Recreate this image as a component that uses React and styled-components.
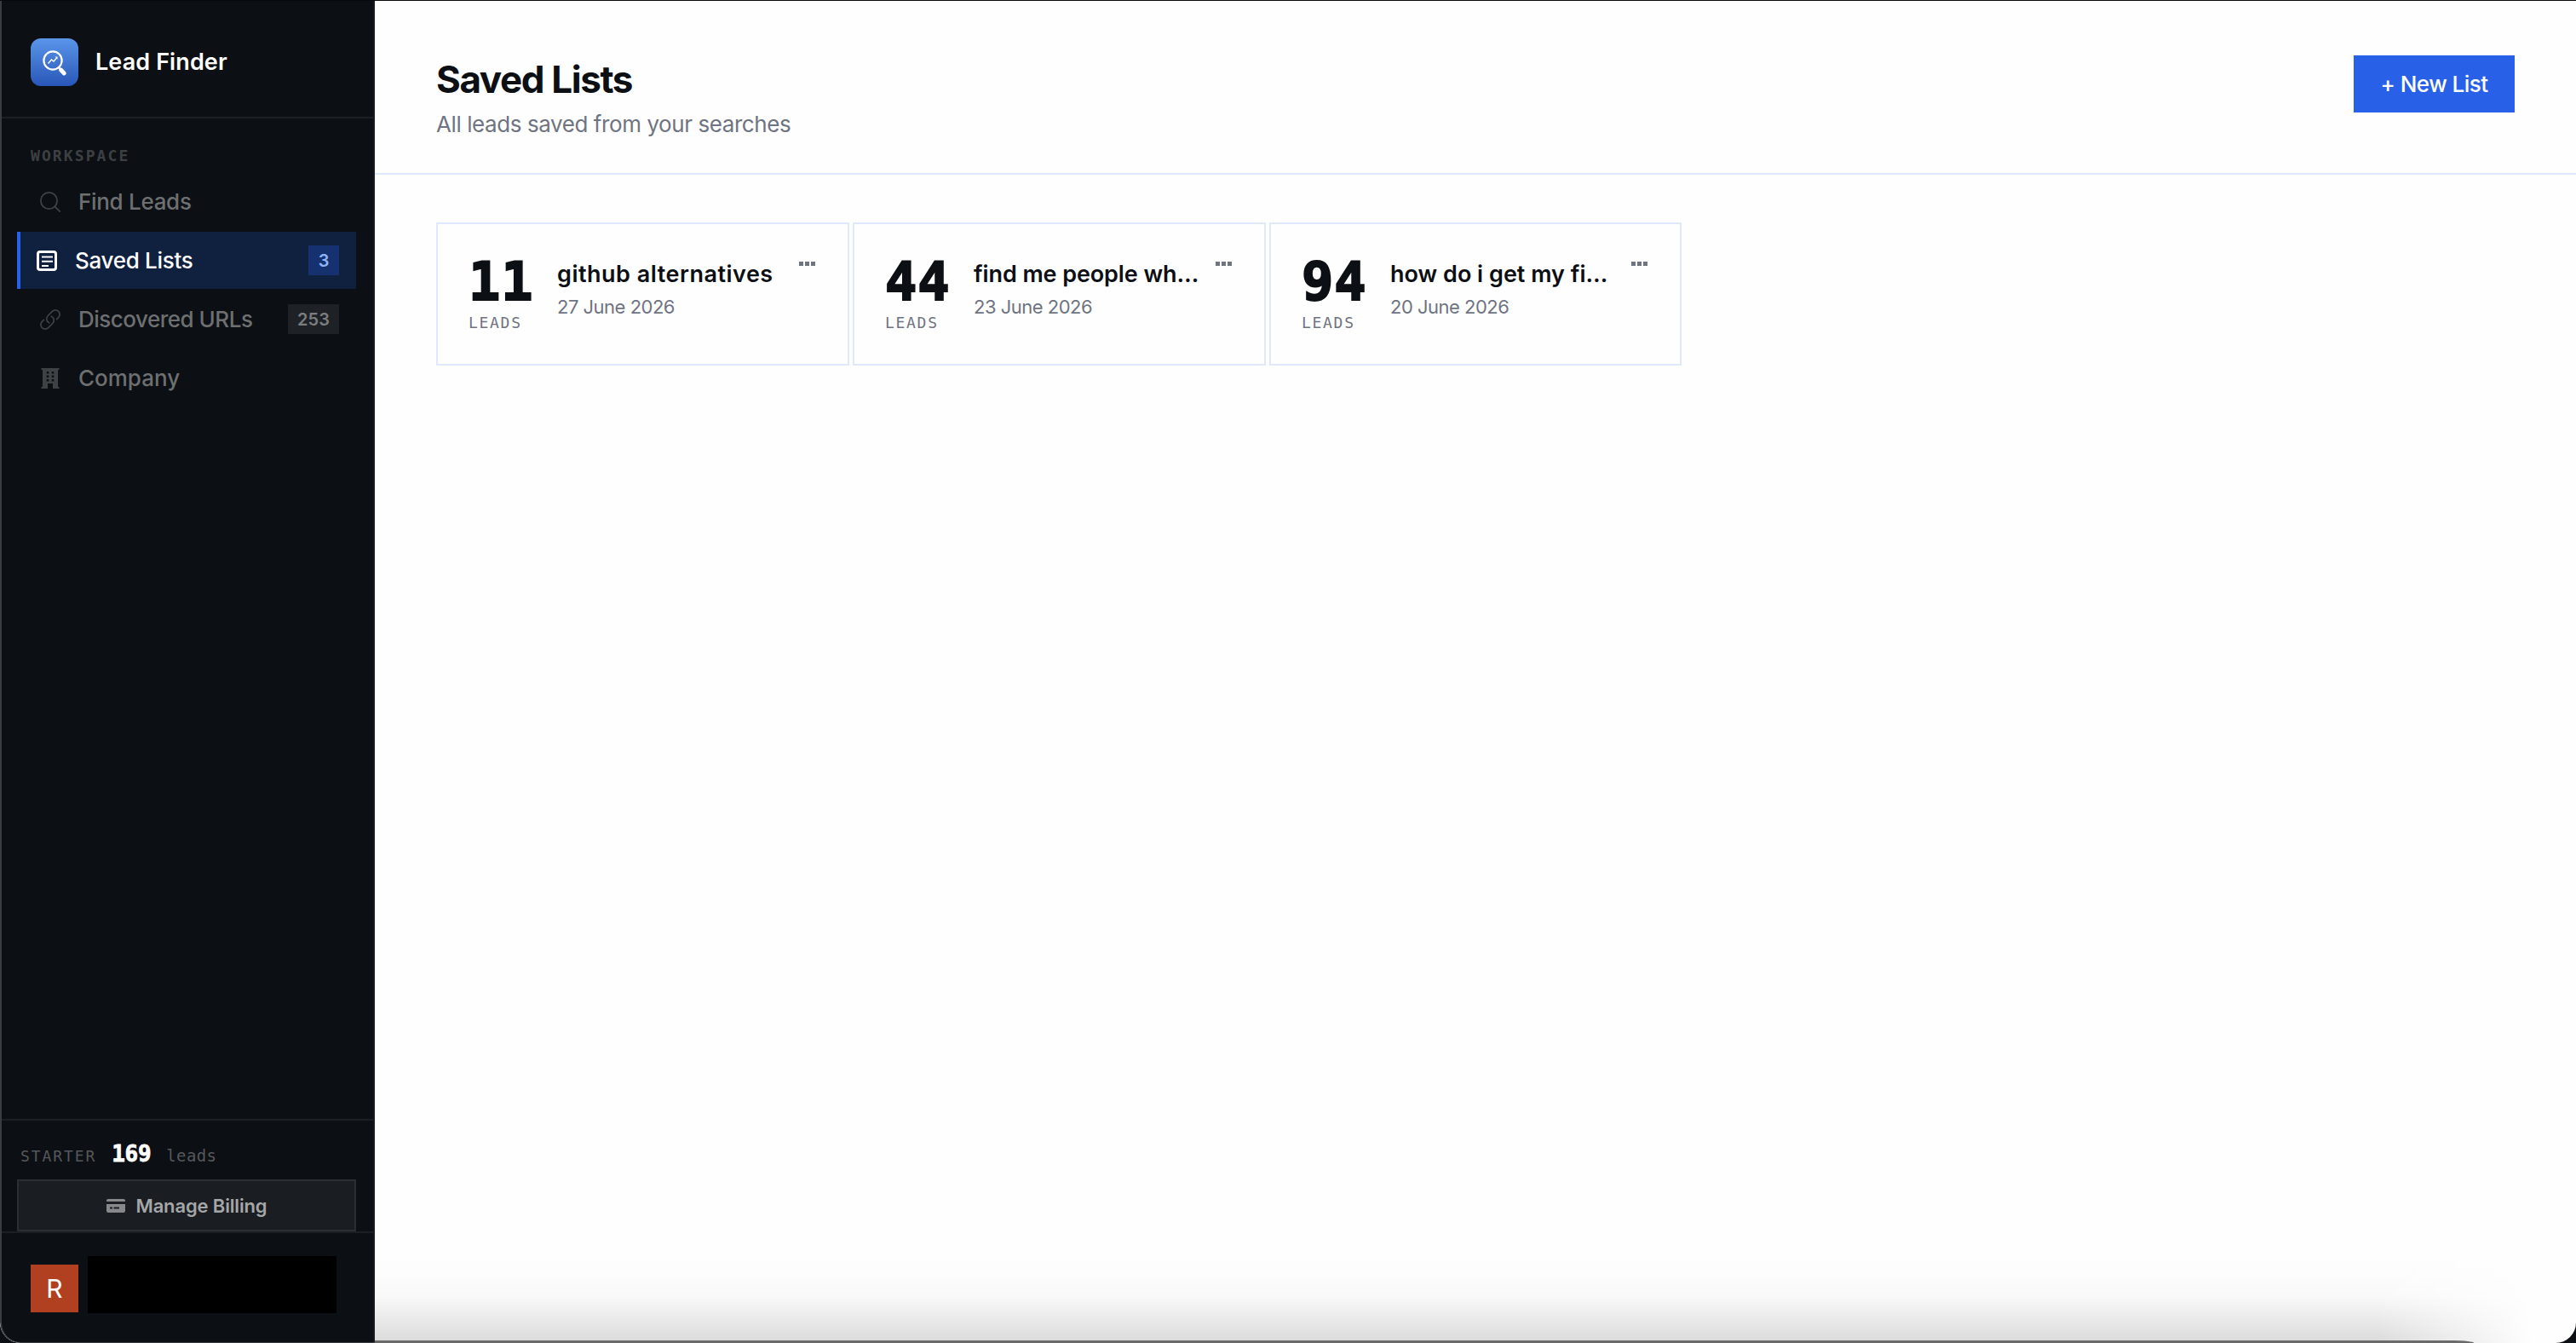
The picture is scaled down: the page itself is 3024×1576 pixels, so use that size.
import styled, { createGlobalStyle } from 'styled-components';

const GlobalStyle = createGlobalStyle`
  * {
    box-sizing: border-box;
  }
  body {
    margin: 0;
    background: #0c0f13;
    font-family: 'Inter', sans-serif;
    overflow: hidden;
  }
  p, h1, h2 {
    margin: 0;
  }
  button {
    border: 0;
    padding: 0;
    font: inherit;
  }
`;

const ui = `'Inter', 'Liberation Sans', sans-serif`;
const mono = `'DejaVu Sans Mono', 'Liberation Mono', monospace`;

const Label = styled.span`
  font-family: ${(p) => (p.$mono ? mono : ui)};
  font-size: ${(p) => p.$size}px;
  font-weight: ${(p) => p.$weight || 400};
  letter-spacing: ${(p) => p.$track || 0}px;
  line-height: ${(p) => p.$line || 32}px;
  color: ${(p) => p.$color || 'inherit'};
  white-space: pre;
`;

const Window = styled.div`
  display: flex;
  position: relative;
  width: 3024px;
  height: 1576px;
  overflow: hidden;
  border-top: 1px solid #08090b;
  border-radius: 0 0 24px 24px;
  background: #fefefe;
`;

const Sidebar = styled.aside`
  display: flex;
  flex-direction: column;
  flex: none;
  width: 440px;
  height: 1575px;
  background: #0c0f13;
  border-left: 2px solid #3a3d40;
  border-right: 2px solid #171b1e;
  border-bottom: 1px solid #3a3d40;
  border-bottom-left-radius: 24px;
`;

const Brand = styled.div`
  display: flex;
  align-items: center;
  gap: 20px;
  height: 138px;
  padding: 8px 0 0 34px;
  border-bottom: 2px solid #1c2024;
`;

const Nav = styled.nav`
  flex: 1;
  display: flex;
  flex-direction: column;
  gap: 2px;
  padding: 28px 20px 0 18px;
`;

const Section = styled.div`
  padding-left: 16px;
  height: 34px;
`;

const NavItem = styled.div`
  display: flex;
  align-items: center;
  height: 67px;
  padding: 0 20px 0 ${(p) => (p.$active ? 19 : 27)}px;
  color: ${(p) => (p.$active ? '#ffffff' : '#6d6f71')};
  background: ${(p) => (p.$active ? '#10203f' : 'transparent')};
  border-left: ${(p) => (p.$active ? '4px solid #2860e8' : '0')};

  svg {
    flex: none;
    width: 24px;
    height: 24px;
    margin-right: 21px;
    color: ${(p) => (p.$active ? '#ffffff' : '#3f4245')};
  }
`;

const Count = styled.span`
  display: flex;
  align-items: center;
  justify-content: center;
  margin-left: auto;
  width: ${(p) => p.$width}px;
  height: 35px;
  color: ${(p) => (p.$active ? '#8db4fb' : '#7b7d7f')};
  background: ${(p) => (p.$active ? '#15316f' : '#1e2226')};
`;

const Plan = styled.div`
  height: 132px;
  padding: 0 20px 0 18px;
  border-top: 2px solid #1c2024;
`;

const Usage = styled.div`
  display: flex;
  align-items: baseline;
  gap: 18px;
  height: 69px;
  padding: 23px 0 0 4px;
`;

const Remaining = styled(Label)`
  -webkit-text-stroke: 0.8px currentColor;
`;

const Billing = styled.button`
  display: flex;
  align-items: center;
  justify-content: center;
  gap: 13px;
  width: 100%;
  height: 61px;
  color: #a4a6a8;
  background: #1a1d21;
  border: 2px solid #2b2e32;
`;

const Account = styled.div`
  display: flex;
  height: 130px;
  gap: 11px;
  padding: 27px 0 0 34px;
  border-top: 2px solid #1c2024;
`;

const Avatar = styled.div`
  display: flex;
  align-items: center;
  justify-content: center;
  width: 56px;
  height: 56px;
  margin-top: 10px;
  background: #b14020;
`;

const Redacted = styled.div`
  width: 292px;
  height: 67px;
  background: #000;
`;

const Main = styled.main`
  flex: 1;
  height: 1575px;
`;

const Header = styled.header`
  display: flex;
  justify-content: space-between;
  height: 204px;
  padding: 64px 72px 0 72px;
  border-bottom: 2px solid #dfe9fb;
`;

const Heading = styled.div`
  display: flex;
  flex-direction: column;
`;

const NewList = styled.button`
  display: flex;
  align-items: center;
  justify-content: center;
  width: 189px;
  height: 67px;
  color: #fff;
  background: #2860e8;
`;

const Grid = styled.section`
  display: grid;
  grid-template-columns: 485px 485px 484px;
  gap: 4px;
  padding: 56px 72px;
`;

const Card = styled.article`
  display: flex;
  height: 168px;
  padding: 36px 36px 0 36px;
  border: 2px solid #dfe9fb;
`;

const Total = styled.div`
  display: flex;
  flex-direction: column;
  width: 104px;
  flex: none;
`;

const Figure = styled(Label)`
  -webkit-text-stroke: 2px currentColor;
`;

const Info = styled.div`
  display: flex;
  flex-direction: column;
  padding-top: 4px;
`;

const Dots = styled.div`
  display: flex;
  gap: 2px;
  margin: 8px 2px 0 auto;

  i {
    width: 5px;
    height: 5px;
    background: #6f7482;
  }
`;

/* shade along the lower edge of the window */
const Shade = styled.div`
  position: absolute;
  left: 440px;
  right: 0;
  bottom: 0;
  height: 100px;
  background: linear-gradient(to bottom, rgba(0, 0, 0, 0), rgba(0, 0, 0, 0.02) 45%, rgba(0, 0, 0, 0.14) 100%);
  mask-image: linear-gradient(to right, #000 91%, transparent 98%);
`;

const Edge = styled.div`
  position: absolute;
  left: 440px;
  width: 2464px;
  bottom: 0;
  height: 3px;
  background: #6a6a6a;
  border-top-right-radius: 24px 3px;
`;

const Logo = () => (
  <svg width='56' height='56' viewBox='0 0 56 56' fill='none'>
    <defs>
      <linearGradient id='logo' x1='0' y1='0' x2='0' y2='1'>
        <stop offset='0' stopColor='#5a96e9' />
        <stop offset='1' stopColor='#2856b8' />
      </linearGradient>
    </defs>
    <rect width='56' height='56' rx='12' fill='url(#logo)' />
    <circle cx='26' cy='26' r='10.6' stroke='#fff' strokeWidth='2.2' />
    <path d='M20.5 29.500l4-4.500 2.500 2 4-4.500' stroke='#fff' strokeWidth='1.4' />
    <path d='M28.500 21.500h3v3z' fill='#fff' />
    <path d='M33 34l2 2' stroke='#fff' strokeWidth='2' />
    <path d='M35.500 37l3.800 4' stroke='#fff' strokeWidth='4.800' strokeLinecap='round' />
  </svg>
);

const SearchIcon = () => (
  <svg viewBox='0 0 24 24' fill='none' stroke='currentColor' strokeWidth='1.8'>
    <circle cx='10.5' cy='10.5' r='9.6' />
    <path d='M17.500 17.500L23.200 23.200' strokeLinecap='round' />
  </svg>
);

const ListIcon = () => (
  <svg viewBox='0 0 24 24' fill='none' stroke='currentColor'>
    <rect x='1.5' y='1.5' width='21' height='21' rx='2.5' strokeWidth='3' />
    <path d='M6 7.500h13M6 12.700h13M6 18h8' strokeWidth='2' />
  </svg>
);

const LinkIcon = () => (
  <svg
    viewBox='1.5 1.5 21 21'
    fill='none'
    stroke='currentColor'
    strokeWidth='1.5'
    strokeLinecap='round'
    strokeLinejoin='round'
  >
    <path d='M13.190 8.688a4.500 4.500 0 0 1 1.242 7.244l-4.500 4.500a4.500 4.500 0 0 1-6.364-6.364l1.757-1.757m13.350-.622l1.757-1.757a4.500 4.500 0 0 0-6.364-6.364l-4.500 4.500a4.500 4.500 0 0 0 1.242 7.244' />
  </svg>
);

const BuildingIcon = () => (
  <svg viewBox='0 0 24 24' fill='currentColor'>
    <path
      fillRule='evenodd'
      d='M1.500 0h21v2H21v20h1.500v2H15v-6H9v6H1.500v-2H3V2H1.500zM7.700 4v2.600h2.600V4zM13.700 4v2.600h2.600V4zM7.700 8.500v2.600h2.600V8.500zM13.700 8.500v2.600h2.600V8.500zM7.700 13v2.600h2.600V13zM13.700 13v2.600h2.600V13z'
    />
  </svg>
);

const CardIcon = () => (
  <svg width='22' height='16' viewBox='0 0 22 16' fill='#86888a'>
    <path d='M0 3V2a2 2 0 0 1 2-2h18a2 2 0 0 1 2 2v1z' />
    <path fillRule='evenodd' d='M0 6h22v8a2 2 0 0 1-2 2H2a2 2 0 0 1-2-2zM4 9.500v2h3v-2zM8.500 9.500v2H15v-2z' />
  </svg>
);

const lists = [
  { total: 11, name: 'github alternatives', date: '27 June 2026', track: 0.5 },
  { total: 44, name: 'find me people wh…', date: '23 June 2026', track: -0.1 },
  { total: 94, name: 'how do i get my fi…', date: '20 June 2026', track: 0 }
];

const navItems = [
  { name: 'Find Leads', icon: SearchIcon, track: -0.3 },
  { name: 'Saved Lists', icon: ListIcon, track: -0.3, count: 3, width: 36, active: true },
  { name: 'Discovered URLs', icon: LinkIcon, track: -0.5, count: 253, width: 60 },
  { name: 'Company', icon: BuildingIcon, track: 0 }
];

function App() {
  return (
    <>
      <GlobalStyle />
      <Window>
        <Sidebar>
          <Brand>
            <Logo />
            <Label $size={27} $weight={600} $track={0.1} $line={34} $color='#fff'>Lead Finder</Label>
          </Brand>
          <Nav>
            <Section>
              <Label $mono $size={18} $weight={700} $track={2.1} $color='#3d4043'>WORKSPACE</Label>
            </Section>
            {navItems.map(({ name, icon: Icon, track, count, width, active }) => (
              <NavItem key={name} $active={active}>
                <Icon />
                <Label $size={26} $weight={500} $track={track}>{name}</Label>
                {count && (
                  <Count $width={width} $active={active}>
                    <Label $size={20} $weight={600}>{count}</Label>
                  </Count>
                )}
              </NavItem>
            ))}
          </Nav>
          <Plan>
            <Usage>
              <Label $mono $size={18} $track={1.9} $color='#55585b'>STARTER</Label>
              <Remaining $mono $size={26} $weight={700} $track={-0.3} $color='#fff'>169</Remaining>
              <Label $mono $size={19} $track={0.4} $color='#55585b'>leads</Label>
            </Usage>
            <Billing>
              <CardIcon />
              <Label $size={22} $weight={600} $track={-0.15}>Manage Billing</Label>
            </Billing>
          </Plan>
          <Account>
            <Avatar>
              <Label $size={30} $color='#fff'>R</Label>
            </Avatar>
            <Redacted />
          </Account>
        </Sidebar>
        <Main>
          <Header>
            <Heading>
              <Label as='h1' $size={44} $weight={700} $track={-1.4} $line={56} $color='#0c0f13'>Saved Lists</Label>
              <Label as='p' $size={26} $track={-0.42} $line={49} $color='#6f7482'>All leads saved from your searches</Label>
            </Heading>
            <NewList>
              <Label $size={26} $weight={500} $track={-0.55}>+ New List</Label>
            </NewList>
          </Header>
          <Grid>
            {lists.map(({ total, name, date, track }) => (
              <Card key={name}>
                <Total>
                  <Figure $mono $size={62} $weight={700} $track={0.9} $line={64} $color='#0c0f13'>{total}</Figure>
                  <Label $mono $size={18} $track={1.7} $color='#6f7482'>LEADS</Label>
                </Total>
                <Info>
                  <Label as='h2' $size={27} $weight={600} $track={track} $line={38} $color='#0c0f13'>{name}</Label>
                  <Label as='p' $size={22} $track={-0.5} $line={38} $color='#6f7482'>{date}</Label>
                </Info>
                <Dots>
                  <i />
                  <i />
                  <i />
                </Dots>
              </Card>
            ))}
          </Grid>
        </Main>
        <Shade />
        <Edge />
      </Window>
    </>
  );
}

export default App;
